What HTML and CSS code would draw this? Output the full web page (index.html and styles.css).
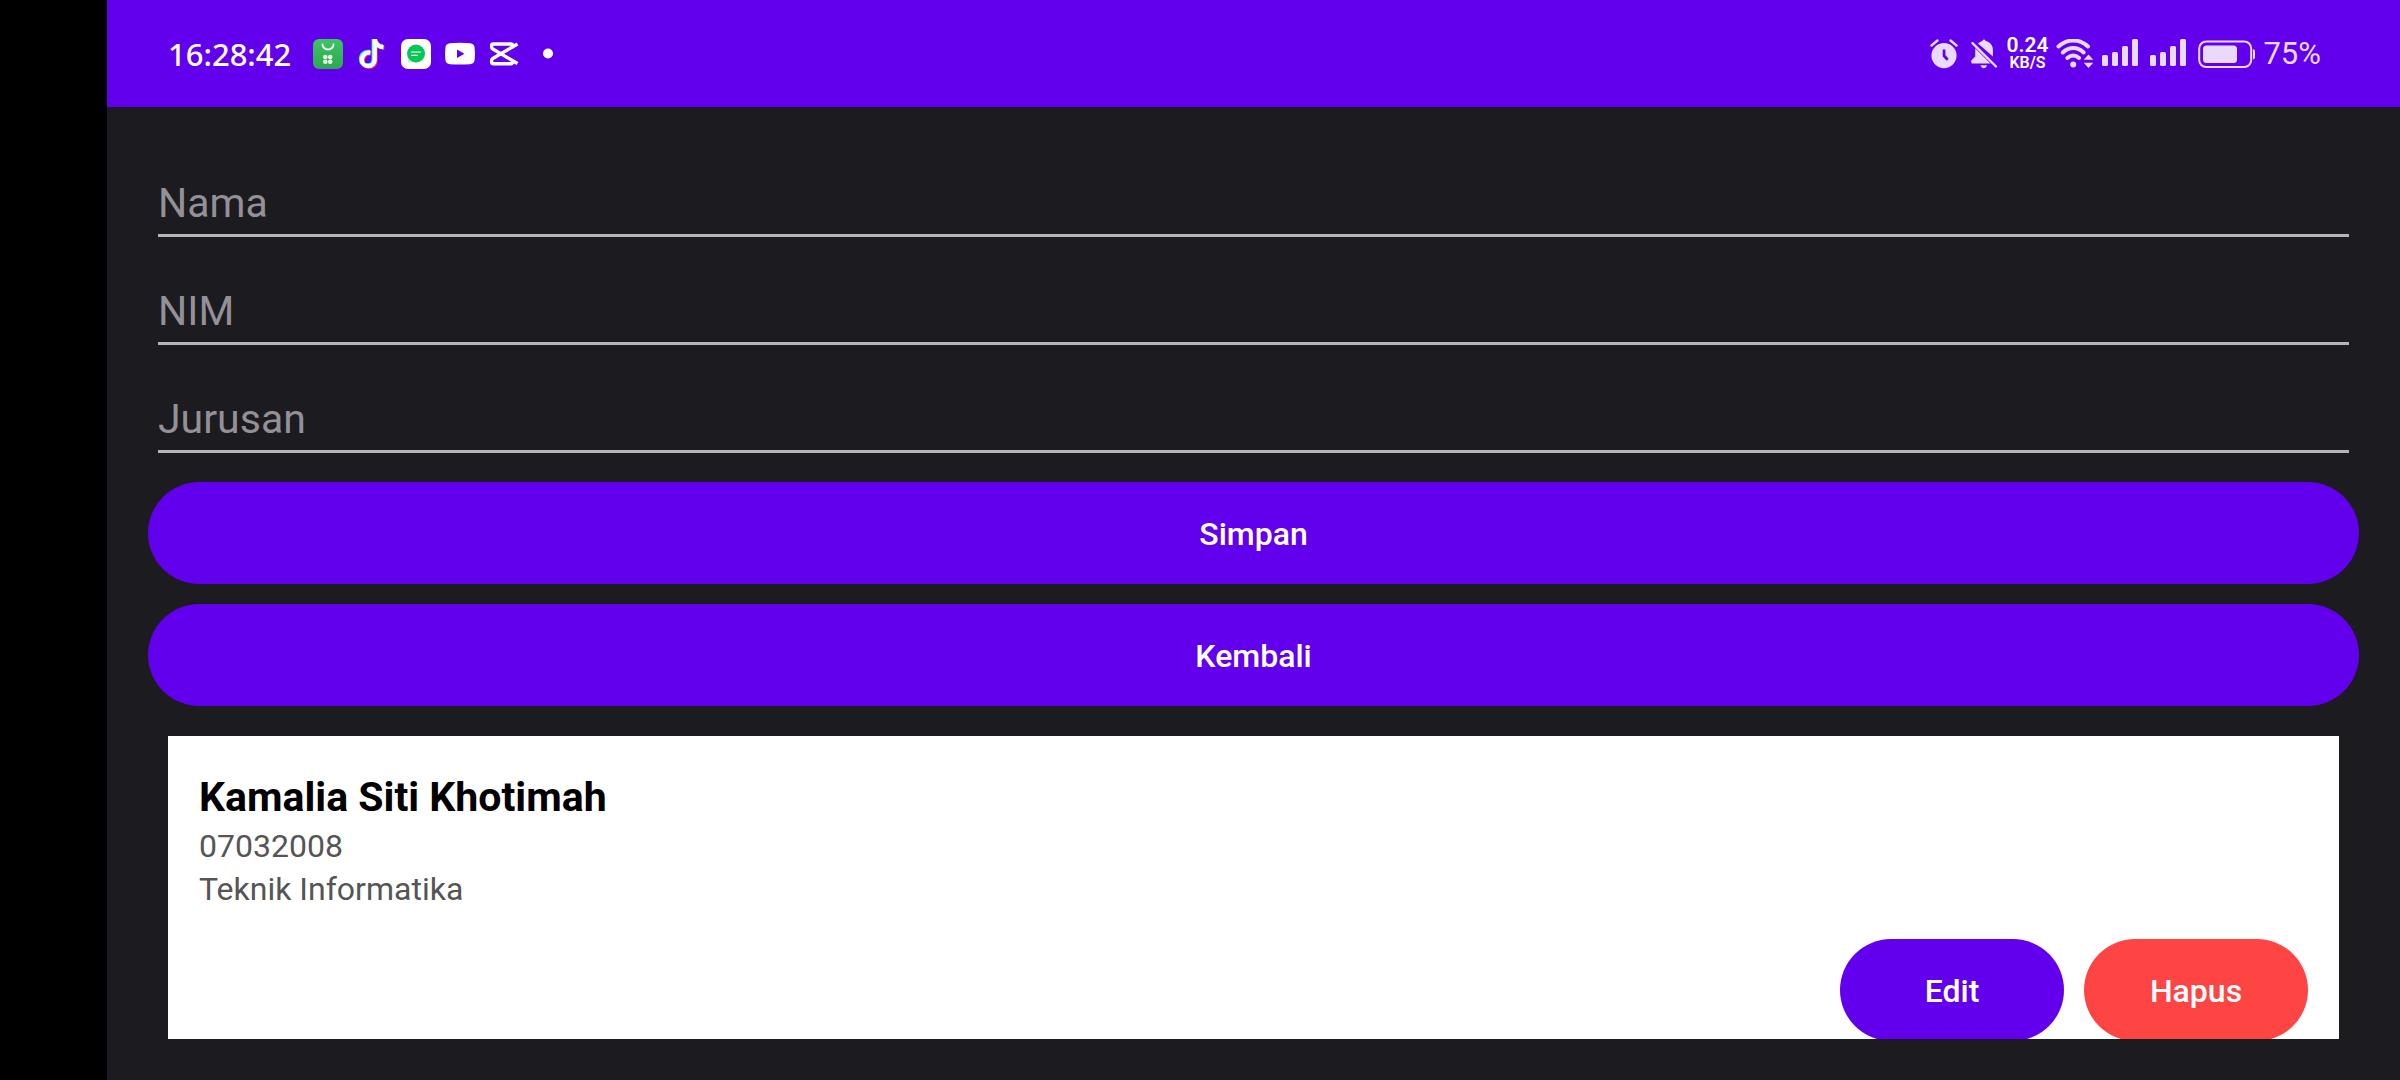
FILE: index.html
```html
<!DOCTYPE html>
<html lang="id">
<head>
<meta charset="utf-8">
<meta name="viewport" content="width=device-width, initial-scale=1">
<title>Data Mahasiswa</title>
<link rel="stylesheet" href="styles.css">
</head>
<body>
<div class="screen">
  <header class="status-bar">
    <div class="status-left">
      <time class="clock">16:28:42</time>
      <div class="notifications">
        <svg class="icon" viewBox="0 0 30 30" aria-hidden="true">
          <defs><linearGradient id="bag" x1="0" y1="0" x2="0" y2="1"><stop offset="0" stop-color="#3fc563"/><stop offset="1" stop-color="#2da650"/></linearGradient></defs>
          <rect width="30" height="30" rx="6" fill="url(#bag)"/>
          <path d="M9.500 5.500a5.500 5 0 0 0 11 0" fill="none" stroke="#fff" stroke-width="1.800" stroke-linecap="round"/>
          <g fill="#e8ffe9"><circle cx="12.300" cy="18" r="2.300"/><circle cx="17.200" cy="18" r="2.300"/><circle cx="12.300" cy="22.800" r="2.300"/><circle cx="17.200" cy="22.800" r="2.300"/></g>
        </svg>
        <svg class="icon" viewBox="0 0 30 30" aria-hidden="true">
          <g fill="none" stroke-width="4.400">
            <path d="M12.500 13.500c-5-.8-8.500 3-8.500 7 0 4 3 6.400 6.400 6.400 3.800 0 6.400-3 6.400-6.400V0c.6 4.600 4 7.600 8.800 7.900" transform="translate(0 -.5)" stroke="#25f4ee"/>
            <path d="M12.500 13.500c-5-.8-8.500 3-8.500 7 0 4 3 6.400 6.400 6.400 3.800 0 6.400-3 6.400-6.400V0c.6 4.600 4 7.600 8.800 7.900" transform="translate(1.800 .9)" stroke="#fe2c55"/>
            <path d="M12.500 13.500c-5-.8-8.500 3-8.500 7 0 4 3 6.400 6.400 6.400 3.800 0 6.400-3 6.400-6.400V0c.6 4.600 4 7.600 8.800 7.900" transform="translate(.9 .2)" stroke="#fff"/>
          </g>
        </svg>
        <svg class="icon" viewBox="0 0 30 30" aria-hidden="true">
          <rect width="30" height="30" rx="7" fill="#fff"/>
          <path d="M7 23.500V15a8.500 8.500 0 1 1 8.500 8.500z" fill="#bdf3cf"/>
          <circle cx="15" cy="14.500" r="9" fill="#06c755"/>
          <path d="M10.500 13h9M10.500 16.300h6" stroke="#fff" stroke-width="1.200" stroke-linecap="round"/>
        </svg>
        <svg class="icon" viewBox="0 0 30 30" aria-hidden="true">
          <path fill-rule="evenodd" fill="#fff" d="M5 4.200Q15 3.400 25 4.200q4.200.3 4.600 4.200.6 6.300 0 12.600-.4 3.900-4.600 4.200-10 .8-20 0Q.8 24.900.4 21-.2 14.700.4 8.400.8 4.500 5 4.200zM12 10.600v8.400l7.400-4.200z"/>
        </svg>
        <svg class="icon" viewBox="0 0 30 30" aria-hidden="true">
          <g fill="none" stroke="#fff" stroke-width="3.400" stroke-linejoin="round">
            <path d="M28.500 5 3.800 19.500Q2.600 20.300 2.600 21.500v1.500q0 1.700 1.700 1.700h17.500q1.700 0 1.700-1.700v-2.500M28.500 24.500 3.800 10Q2.600 9.200 2.600 8V6.700Q2.600 5 4.300 5h17.500q1.700 0 1.700 1.700v2.500"/>
          </g>
        </svg>
        <svg class="icon" viewBox="0 0 30 30" aria-hidden="true"><circle cx="15" cy="14.500" r="5" fill="#fff"/></svg>
      </div>
    </div>
    <div class="status-right">
      <svg class="icon-alarm" viewBox="0 0 28 30" aria-hidden="true">
        <path fill-rule="evenodd" d="M14 4a12.600 12.600 0 1 1 0 25.200A12.600 12.600 0 0 1 14 4zm-1.300 6.500v7l4 4.300 2-2-3.300-3.500v-5.800z"/>
        <path d="M1.500 6.500 7.500 1.500M26.500 6.500l-6-5" stroke="#e8d9fd" stroke-width="2.400" stroke-linecap="round"/>
      </svg>
      <svg class="icon-bell" viewBox="0 0 28 30" aria-hidden="true">
        <path d="M8 4.600Q10 2.600 12.300 2.100 12.500.5 14 .5t1.700 1.600c4.500 1 7.200 4.500 7.200 9v6.500zM5.200 9.200 20.500 24.500H2.600Q1.200 24.500 1.200 23v-1.500l4-4zM10.500 26.300h6.500q-.8 3-3.200 3t-3.300-3z"/>
        <path d="M2.500 4.200 26 27.500" stroke="#e8d9fd" stroke-width="2.400" stroke-linecap="round"/>
      </svg>
      <p class="net-speed">0.24<br><small class="net-unit">KB/S</small></p>
      <svg class="icon-wifi" viewBox="0 0 38 30" aria-hidden="true">
        <g fill="none" stroke="#e8d9fd" stroke-width="4" stroke-linecap="round">
          <path d="M2.500 7.500c9-8 20.500-8 29.500 0"/><path d="M6.800 13.500c6.400-6 14.500-6 20.900 0"/><path d="M11.300 19q6-5 11.800 0"/>
        </g>
        <circle cx="17.200" cy="25.500" r="3"/>
        <path d="m32.500 15.500 4.800 5.300h-9.600zM32.500 29l4.800-5.300h-9.600z"/>
      </svg>
      <svg class="icon-signal" viewBox="0 0 36 30" aria-hidden="true"><rect x="0" y="16" width="6" height="11" rx="1.500"/><rect x="10" y="13" width="6" height="14" rx="1.500"/><rect x="20" y="7" width="6" height="20" rx="1.500"/><rect x="30" y="0" width="6" height="27" rx="1.500"/></svg>
      <svg class="icon-signal" viewBox="0 0 36 30" aria-hidden="true"><rect x="0" y="16" width="6" height="11" rx="1.500"/><rect x="10" y="13" width="6" height="14" rx="1.500"/><rect x="20" y="7" width="6" height="20" rx="1.500"/><rect x="30" y="0" width="6" height="27" rx="1.500"/></svg>
      <svg class="icon-battery" viewBox="0 0 57 30" aria-hidden="true">
        <rect x="1.200" y="2.500" width="52" height="25.500" rx="7" fill="none" stroke="#e8d9fd" stroke-width="2"/>
        <rect x="5" y="6.500" width="34" height="17.500" rx="3.500"/><path d="M55 10q2 .5 2 2v6.500q0 1.500-2 2z"/>
      </svg>
      <span class="battery-level">75%</span>
    </div>
  </header>

  <main class="content">
    <form class="student-form">
      <input class="field" type="text" name="nama" placeholder="Nama" aria-label="Nama">
      <input class="field" type="text" name="nim" placeholder="NIM" aria-label="NIM">
      <input class="field" type="text" name="jurusan" placeholder="Jurusan" aria-label="Jurusan">
      <div class="form-actions">
        <button class="btn" type="button">Simpan</button>
        <button class="btn" type="button">Kembali</button>
      </div>
    </form>

    <article class="student-card">
      <h2 class="student-name">Kamalia Siti Khotimah</h2>
      <p class="student-detail">07032008</p>
      <p class="student-detail">Teknik Informatika</p>
      <div class="card-actions">
        <button class="btn" type="button">Edit</button>
        <button class="btn btn-danger" type="button">Hapus</button>
      </div>
    </article>
  </main>
</div>
</body>
</html>
```
FILE: styles.css
```css
* {
  box-sizing: border-box;
}

body {
  margin: 0;
  background: #000;
  font-family: Roboto, "Liberation Sans", sans-serif;
}

/* The strip on the left is the display cutout */
.screen {
  min-height: 100vh;
  margin-left: 107px;
  background: #1c1b1f;
}

.status-bar {
  display: flex;
  align-items: center;
  justify-content: space-between;
  height: 107px;
  padding: 0 79px 0 61px;
  background: #6200ee;
  color: #fff;
}

.status-left,
.status-right,
.notifications {
  display: flex;
  align-items: center;
}

.status-left {
  gap: 22px;
}

.clock {
  font: 500 31px/40px "Noto Sans", sans-serif;
}

.notifications {
  gap: 14px;
}

.icon {
  width: 30px;
  height: 30px;
}

.status-right {
  gap: 8px;
  color: #e8d9fd;
  fill: #e8d9fd;
}

.icon-alarm,
.icon-bell {
  width: 28px;
  height: 30px;
}

.icon-alarm,
.icon-signal {
  margin-right: 4px;
}

.net-speed {
  margin: 0;
  color: #fff;
  font-size: 21px;
  font-weight: 600;
  line-height: 16px;
  text-align: center;
}

.net-unit {
  font-size: 16px;
}

.icon-wifi {
  width: 38px;
  height: 30px;
}

.icon-signal {
  width: 36px;
  height: 30px;
}

.icon-battery {
  width: 57px;
  height: 30px;
}

.battery-level {
  font-size: 31px;
  line-height: 40px;
}

.content {
  padding: 41px;
}

.student-form {
  display: flex;
  flex-direction: column;
  gap: 19px;
}

.field {
  height: 89px;
  margin: 0 10px;
  padding: 24px 0 0;
  border: 0;
  border-bottom: 3px solid #b7b4bc;
  border-radius: 0;
  outline: 0;
  background: transparent;
  color: #e6e1e5;
  font: 400 41px/48px Roboto, sans-serif;
}

.field::placeholder {
  color: #939197;
  opacity: 1;
}

.form-actions {
  display: flex;
  flex-direction: column;
  gap: 20px;
  padding-top: 10px;
}

.btn {
  flex-shrink: 0;
  min-width: 224px;
  height: 102px;
  padding: 2px 61px 0;
  border: 0;
  border-radius: 51px;
  background: #6200ee;
  color: #fff;
  font: 500 32px/40px Roboto, sans-serif;
}

.btn-danger {
  background: #ff4444;
}

.student-card {
  margin: 30px 20px 0;
  padding: 34px 31px 0;
  overflow: hidden;
  background: #fff;
}

.student-name {
  margin: 0;
  color: #000;
  font-size: 41px;
  font-weight: 700;
  line-height: 55px;
}

.student-detail {
  margin: 0;
  color: #555;
  font-size: 32px;
  line-height: 43px;
}

/* Slightly shorter than its buttons, so the card trims their lower edge */
.card-actions {
  display: flex;
  justify-content: flex-end;
  gap: 20px;
  height: 100px;
  margin-top: 28px;
}
```
